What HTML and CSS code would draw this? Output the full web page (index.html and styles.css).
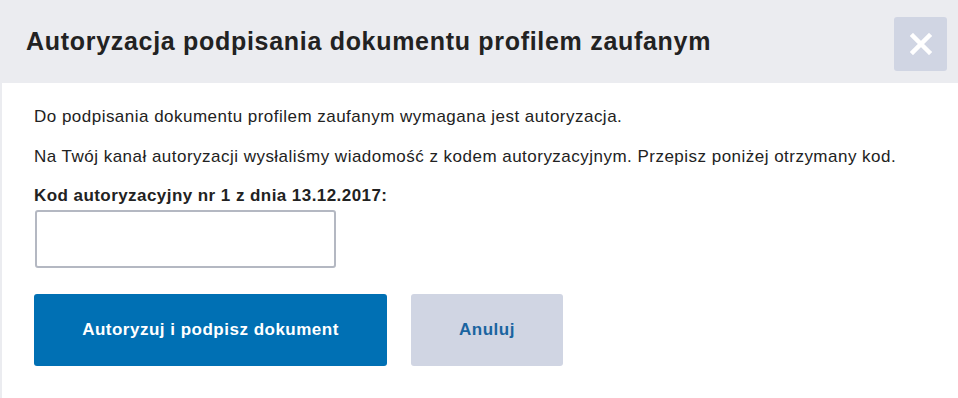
FILE: index.html
```html
<!DOCTYPE html>
<html lang="pl">
<head>
<meta charset="utf-8">
<link rel="stylesheet" href="styles.css">
</head>
<body>
<div class="dialog">
  <header class="head">
    <h1 class="title">Autoryzacja podpisania dokumentu profilem zaufanym</h1>
    <button class="close" aria-label="Zamknij">
      <svg width="22" height="22" viewBox="0 0 22 22"><path d="M3 3L19 19M19 3L3 19" stroke="#fff" stroke-width="4.5" stroke-linecap="square"/></svg>
    </button>
  </header>
  <main class="body">
    <p class="text">Do podpisania dokumentu profilem zaufanym wymagana jest autoryzacja.</p>
    <p class="text">Na Twój kanał autoryzacji wysłaliśmy wiadomość z kodem autoryzacyjnym. Przepisz poniżej otrzymany kod.</p>
    <label class="label" for="kod">Kod autoryzacyjny nr 1 z dnia 13.12.2017:</label>
    <input class="input" id="kod" type="text">
    <div class="actions">
      <button class="btn primary">Autoryzuj i podpisz dokument</button>
      <button class="btn secondary">Anuluj</button>
    </div>
  </main>
</div>
</body>
</html>
```
FILE: styles.css
```css
html, body {
  margin: 0;
  padding: 0;
  background: #fff;
}
body {
  font-family: "Liberation Sans", Arial, sans-serif;
  color: #222;
}
.dialog {
  width: 958px;
  height: 398px;
  display: flex;
  flex-direction: column;
}
.head {
  height: 83px;
  background: #ebecf0;
  display: flex;
  align-items: flex-start;
  justify-content: space-between;
  padding: 0 11px 0 26px;
  box-sizing: border-box;
}
.title {
  margin: 27px 0 0;
  font-size: 25px;
  letter-spacing: 0.7px;
  font-weight: bold;
  line-height: 28px;
  color: #222;
}
.close {
  margin-top: 17px;
  width: 53px;
  height: 54px;
  border: none;
  border-radius: 3px;
  background: #d0d5e3;
  display: flex;
  align-items: center;
  justify-content: center;
  padding: 0;
}
.body {
  flex: 1;
  border-left: 2px solid #ebecf0;
  padding: 0 0 0 32px;
  display: flex;
  flex-direction: column;
  align-items: flex-start;
}
.text {
  margin: 0;
  font-size: 17px;
  letter-spacing: 0.48px;
  line-height: 20px;
}
.text:first-child {
  margin-top: 24px;
}
.text + .text {
  margin-top: 20px;
}
.label {
  margin-top: 19px;
  font-size: 17px;
  letter-spacing: 0.44px;
  line-height: 20px;
  font-weight: bold;
}
.input {
  margin-top: 4px;
  margin-left: 1px;
  width: 301px;
  height: 58px;
  box-sizing: border-box;
  border: 2px solid #b4b8c2;
  border-radius: 3px;
  background: #fff;
  font: inherit;
}
.actions {
  margin-top: 26px;
  display: flex;
  gap: 24px;
}
.btn {
  height: 72px;
  border: none;
  border-radius: 3px;
  font-family: "Liberation Sans", Arial, sans-serif;
  font-size: 17px;
  letter-spacing: 0.5px;
  font-weight: bold;
  padding: 0;
}
.primary {
  width: 353px;
  background: #0070b4;
  color: #fff;
}
.secondary {
  width: 152px;
  background: #d0d5e3;
  color: #1a64a0;
}
```
